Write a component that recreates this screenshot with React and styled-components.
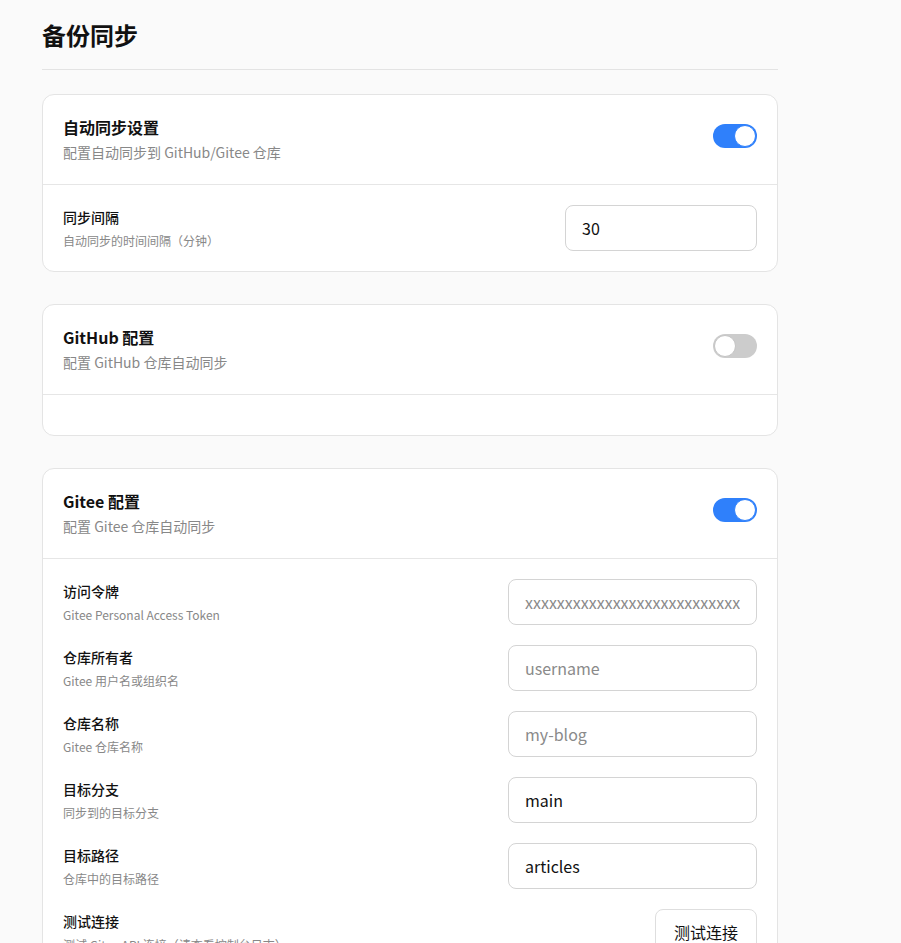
import styled, { createGlobalStyle } from "styled-components";

const GlobalStyle = createGlobalStyle`
  html, body {
    margin: 0;
    background: #fafafa;
    font-family: "Noto Sans CJK SC", "Noto Sans", sans-serif;
    color: #111;
  }
`;

const Page = styled.div`
  width: 736px;
  margin-left: 42px;
  padding-top: 19px;
  padding-bottom: 40px;
`;

const Title = styled.h1`
  margin: 0 0 24px;
  font-size: 24px;
  line-height: 32px;
  font-weight: 700;
  padding-bottom: 18px;
  border-bottom: 1px solid #e3e3e3;
`;

const Card = styled.section`
  background: #fff;
  border: 1px solid #e4e4e4;
  border-radius: 12px;
  margin-bottom: 32px;
  overflow: hidden;
`;

const CardHeader = styled.div`
  display: flex;
  align-items: center;
  justify-content: space-between;
  padding: 20px 20px 22px;
  border-bottom: 1px solid #e6e6e6;
`;

const HeaderTitle = styled.div`
  font-size: 16px;
  font-weight: 700;
  line-height: 24px;
`;

const HeaderDesc = styled.div`
  font-size: 14px;
  line-height: 20px;
  color: #888;
  margin-top: 3px;
`;

const CardBody = styled.div`
  display: flex;
  flex-direction: column;
  gap: 20px;
  padding: 20px;
`;

const Row = styled.div`
  display: flex;
  align-items: center;
  justify-content: space-between;
`;

const Label = styled.div`
  font-size: 14px;
  font-weight: 500;
  line-height: 20px;
  margin-top: 1px;
`;

const Desc = styled.div`
  font-size: 12px;
  line-height: 20px;
  color: #888;
  margin-top: 4px;
`;

const Input = styled.input`
  box-sizing: border-box;
  width: ${(p) => p.$w}px;
  height: 46px;
  border: 1px solid #d4d4d4;
  border-radius: 8px;
  padding: 0 16px;
  font-family: inherit;
  font-size: 16px;
  color: #111;
  background: #fff;
  outline: none;
  &::placeholder {
    color: #8a8a8a;
  }
`;

const Button = styled.button`
  box-sizing: border-box;
  width: 102px;
  height: 46px;
  border: 1px solid #dedede;
  border-radius: 8px;
  background: #fff;
  font-family: inherit;
  font-size: 16px;
  color: #111;
`;

const Switch = styled.div`
  box-sizing: border-box;
  width: 44px;
  height: 24px;
  margin-bottom: 6px;
  border-radius: 12px;
  background: ${(p) => (p.$on ? "#2f80fb" : "#cccccc")};
  display: flex;
  align-items: center;
  justify-content: ${(p) => (p.$on ? "flex-end" : "flex-start")};
  padding: 1px;
  flex-shrink: 0;
`;

const Knob = styled.div`
  box-sizing: border-box;
  width: 22px;
  height: 22px;
  border-radius: 50%;
  background: #fff;
  border: 1px solid ${(p) => (p.$on ? "#2f80fb" : "#c4c4c4")};
`;

const Toggle = ({ on }) => (
  <Switch $on={on}>
    <Knob $on={on} />
  </Switch>
);

const Header = ({ title, desc, on }) => (
  <CardHeader>
    <div>
      <HeaderTitle>{title}</HeaderTitle>
      <HeaderDesc>{desc}</HeaderDesc>
    </div>
    <Toggle on={on} />
  </CardHeader>
);

const Field = ({ label, desc, children }) => (
  <Row>
    <div>
      <Label>{label}</Label>
      <Desc>{desc}</Desc>
    </div>
    {children}
  </Row>
);

const giteeFields = [
  { label: "访问令牌", desc: "Gitee Personal Access Token", placeholder: "xxxxxxxxxxxxxxxxxxxxxxxxxxxxxxxx" },
  { label: "仓库所有者", desc: "Gitee 用户名或组织名", placeholder: "username" },
  { label: "仓库名称", desc: "Gitee 仓库名称", placeholder: "my-blog" },
  { label: "目标分支", desc: "同步到的目标分支", value: "main" },
  { label: "目标路径", desc: "仓库中的目标路径", value: "articles" },
];

export default function App() {
  return (
    <>
      <GlobalStyle />
      <Page>
        <Title>备份同步</Title>

        <Card>
          <Header title="自动同步设置" desc="配置自动同步到 GitHub/Gitee 仓库" on />
          <CardBody>
            <Field label="同步间隔" desc="自动同步的时间间隔（分钟）">
              <Input $w={192} defaultValue="30" />
            </Field>
          </CardBody>
        </Card>

        <Card>
          <Header title="GitHub 配置" desc="配置 GitHub 仓库自动同步" on={false} />
          <CardBody />
        </Card>

        <Card>
          <Header title="Gitee 配置" desc="配置 Gitee 仓库自动同步" on />
          <CardBody>
            {giteeFields.map((f) => (
              <Field key={f.label} label={f.label} desc={f.desc}>
                <Input $w={249} placeholder={f.placeholder} defaultValue={f.value} />
              </Field>
            ))}
            <Field label="测试连接" desc="测试 Gitee API 连接（请查看控制台日志）">
              <Button>测试连接</Button>
            </Field>
          </CardBody>
        </Card>
      </Page>
    </>
  );
}
